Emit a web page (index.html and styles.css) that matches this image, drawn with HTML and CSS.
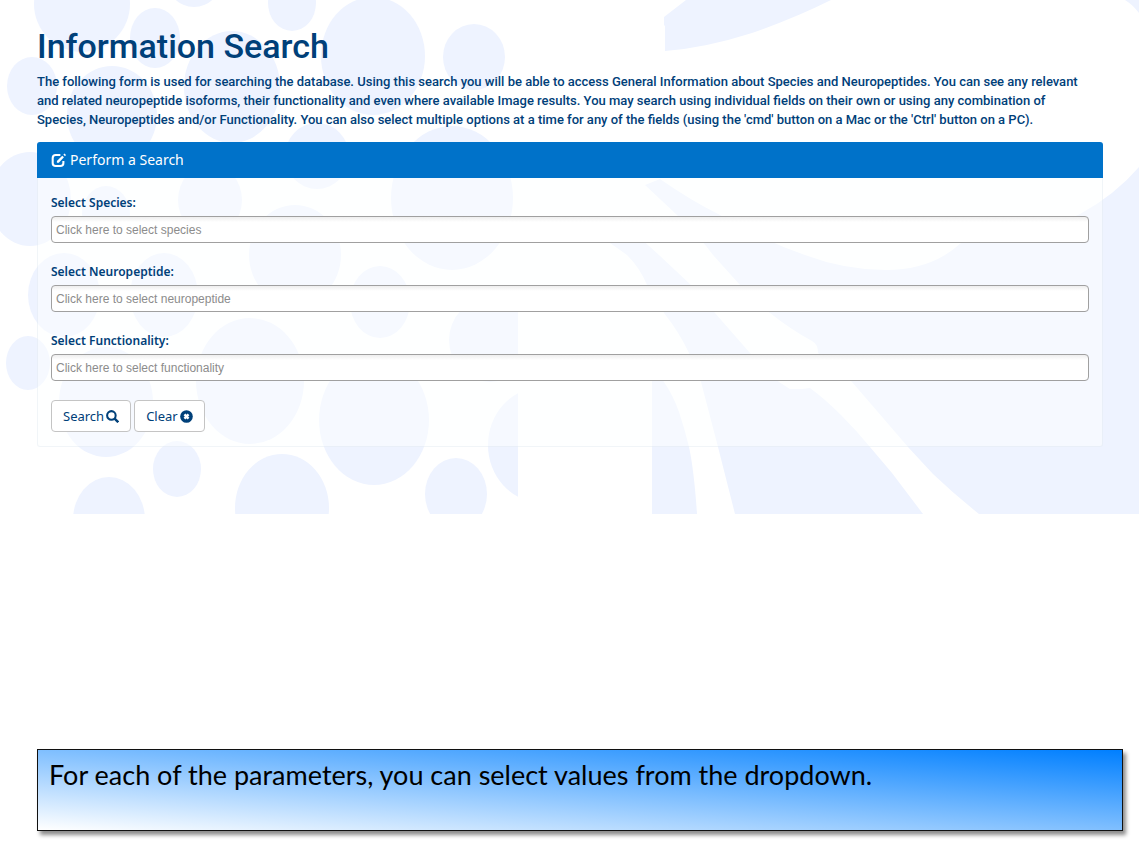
FILE: index.html
```html
<!DOCTYPE html>
<html lang="en">
<head>
  <meta charset="UTF-8" />
  <meta name="viewport" content="width=device-width, initial-scale=1.0" />
  <title>Information Search</title>
  <link rel="stylesheet" href="styles.css">
</head>
<body>
  <svg class="backdrop" viewBox="0 0 1140 514" aria-hidden="true">
    <clipPath id="cells-clip"><rect x="0" y="0" width="518" height="514" /></clipPath>
    <g clip-path="url(#cells-clip)">
      <ellipse cx="82" cy="4" rx="48" ry="48" />
      <ellipse cx="194" cy="-22" rx="28" ry="29" />
      <ellipse cx="155" cy="38" rx="25" ry="30" />
      <ellipse cx="292" cy="3" rx="24" ry="28" />
      <ellipse cx="373" cy="56" rx="52" ry="59" />
      <ellipse cx="474" cy="57" rx="31" ry="33" />
      <ellipse cx="232" cy="87" rx="48" ry="56" />
      <ellipse cx="32" cy="86" rx="25" ry="29" />
      <ellipse cx="112" cy="115" rx="45" ry="49" />
      <ellipse cx="30" cy="199" rx="41" ry="47" />
      <ellipse cx="317" cy="156" rx="32" ry="33" />
      <ellipse cx="452" cy="198" rx="61" ry="72" />
      <ellipse cx="210" cy="200" rx="32" ry="36" />
      <ellipse cx="106" cy="214" rx="24" ry="28" />
      <ellipse cx="295" cy="255" rx="46" ry="50" />
      <ellipse cx="64" cy="295" rx="36" ry="42" />
      <ellipse cx="164" cy="295" rx="34" ry="42" />
      <ellipse cx="380" cy="302" rx="30" ry="36" />
      <ellipse cx="490" cy="340" rx="41" ry="42" />
      <ellipse cx="250" cy="381" rx="54" ry="63" />
      <ellipse cx="28" cy="363" rx="22" ry="27" />
      <ellipse cx="106" cy="402" rx="47" ry="55" />
      <ellipse cx="374" cy="420" rx="55" ry="65" />
      <ellipse cx="177" cy="469" rx="24" ry="28" />
      <ellipse cx="109" cy="520" rx="36" ry="43" />
      <ellipse cx="282" cy="508" rx="47" ry="54" />
      <ellipse cx="456" cy="494" rx="31" ry="36" />
      <ellipse cx="540" cy="445" rx="52" ry="57" />
    </g>
    <path d="M686 0L664 17V25L665 26V51Q705 48 752 33Q795 18 831 0Z" />
    <path d="M1125 0Q1133 5 1139 13V0Z" />
    <path d="M645 185L660 179Q690 200 720 215Q762 240 805 255Q845 270 886 270Q920 270 945 255Q953 250 961 243Q1040 234 1080 214Q1115 195 1139 167V514H979Q955 495 933 474Q920 460 908 447L852 382L818 353Q818 344 812 341Q790 329 770 313Q753 300 740 285L713 255Q700 237 677 215Z" />
    <path d="M600 236L638 236L659 255L691 285L715 313L750 353L779 382L790 389H802L810 388Q825 399 841 415Q856 430 870 447L892 473L923 514H735L718 447L701 382L689 353Q679 332 664 313L647 285Q640 268 627 255Z" />
    <path d="M652 366L664 382Q673 395 679 412Q685 430 689 447Q694 470 697 514H652Z" />
  </svg>

  <main class="page">
    <h1>Information Search</h1>
    <p class="intro">The following form is used for searching the database. Using this search you will be able to access General Information about Species and Neuropeptides. You can see any relevant<br> and related neuropeptide isoforms, their functionality and even where available Image results. You may search using individual fields on their own or using any combination of<br> Species, Neuropeptides and/or Functionality. You can also select multiple options at a time for any of the fields (using the 'cmd' button on a Mac or the 'Ctrl' button on a PC).</p>

    <section class="panel">
      <h2 class="panel-heading">
        <svg class="icon" viewBox="0 0 16 16" aria-hidden="true">
          <path d="M10 2.200H5Q1.800 2.200 1.800 5.200V10.800Q1.800 13.800 5 13.800H10Q13.200 13.800 13.200 10.800V8.500" fill="none" stroke="currentColor" stroke-width="2.200" />
          <path d="M6.300 10.500V8.500L12 2.800L13.800 4.600L8.300 10.500Z M13.200 1.700L14.400 0.500L16 2.100L14.900 3.400Z" fill="currentColor" />
        </svg>
        Perform a Search
      </h2>
      <form class="panel-body">
        <div class="field">
          <label for="species">Select Species:</label>
          <input type="text" id="species" placeholder="Click here to select species" autocomplete="off" />
        </div>
        <div class="field">
          <label for="neuropeptide">Select Neuropeptide:</label>
          <input type="text" id="neuropeptide" placeholder="Click here to select neuropeptide" autocomplete="off" />
        </div>
        <div class="field">
          <label for="functionality">Select Functionality:</label>
          <input type="text" id="functionality" placeholder="Click here to select functionality" autocomplete="off" />
        </div>
        <div class="buttons">
          <button type="submit">Search
            <svg class="icon" viewBox="0 0 14 14" aria-hidden="true">
              <circle cx="5.800" cy="5.800" r="4.600" fill="none" stroke="currentColor" stroke-width="2.200" />
              <path d="M9 9L13.200 13.200" stroke="currentColor" stroke-width="2.600" />
            </svg>
          </button>
          <button type="reset">Clear
            <svg class="icon" viewBox="0 0 14 14" aria-hidden="true">
              <circle cx="7" cy="7" r="6.800" fill="currentColor" />
              <path d="M4.800 4.800L9.200 9.200M9.200 4.800L4.800 9.200" stroke="#fff" stroke-width="2.600" />
            </svg>
          </button>
        </div>
      </form>
    </section>
  </main>

  <aside class="caption">For each of the parameters, you can select values from the dropdown.</aside>
</body>
</html>
```

FILE: styles.css
```css
* {
  margin: 0;
  padding: 0;
  box-sizing: border-box;
}

body {
  position: relative;
  display: flex;
  flex-direction: column;
  min-height: 100vh;
  background: #fff;
  color: #004079;
  font-family: "Noto Sans", sans-serif;
}

/* cell pattern behind the form */
.backdrop {
  position: absolute;
  top: 0;
  left: 0;
  z-index: -1;
  width: 100%;
  fill: #eef3ff;
}

.page {
  padding: 25px 37px;
}

h1 {
  font-family: Roboto, sans-serif;
  font-size: 34px;
  font-weight: 500;
  line-height: 42px;
  margin-bottom: 5px;
}

.intro {
  font-family: Roboto, sans-serif;
  font-size: 13px;
  font-weight: 500;
  line-height: 19px;
  margin-bottom: 13px;
}

.panel {
  background: rgba(253, 255, 255, 0.5);
  border: 1px solid rgba(0, 64, 121, 0.05);
  border-top: none;
  border-radius: 3px;
}

.panel-heading {
  display: flex;
  align-items: center;
  gap: 4px;
  margin: 0 -1px;
  padding: 0 14px;
  background: #0072c9;
  border-radius: 3px 3px 0 0;
  color: #fff;
  font-size: 14px;
  font-weight: 400;
  line-height: 36px;
}

.panel-heading .icon {
  width: 15px;
  height: 15px;
}

.panel-body {
  padding: 15px 13px 14px;
}

.field {
  margin-bottom: 19px;
}

.field label {
  display: block;
  font-size: 12px;
  font-weight: 600;
  line-height: 20px;
  margin-bottom: 3px;
}

.field input {
  display: block;
  width: 100%;
  height: 27px;
  padding: 0 4px;
  border: 1px solid #a0a0a0;
  border-radius: 4px;
  background: linear-gradient(#eee, #fff 5px);
  font-family: "Liberation Sans", sans-serif;
  font-size: 12px;
}

.field input::placeholder {
  color: #8c8c8c;
}

.buttons {
  display: flex;
  gap: 3px;
}

button {
  display: flex;
  align-items: center;
  gap: 2px;
  height: 32px;
  padding: 0 11px;
  background: #fff;
  border: 1px solid #c4c4c4;
  border-radius: 4px;
  color: inherit;
  font-family: inherit;
  font-size: 13px;
}

button .icon {
  width: 13px;
  height: 13px;
}

.caption {
  min-height: 82px;
  margin: auto 17px 24px 37px;
  padding: 8px 11px;
  background: linear-gradient(to top right, #fff, #007fff);
  border: 1px solid #111;
  box-shadow: 3px 4px 4px rgba(0, 0, 0, 0.45);
  color: #000;
  font-family: Lato, sans-serif;
  font-size: 27px;
  line-height: 34px;
}
```
